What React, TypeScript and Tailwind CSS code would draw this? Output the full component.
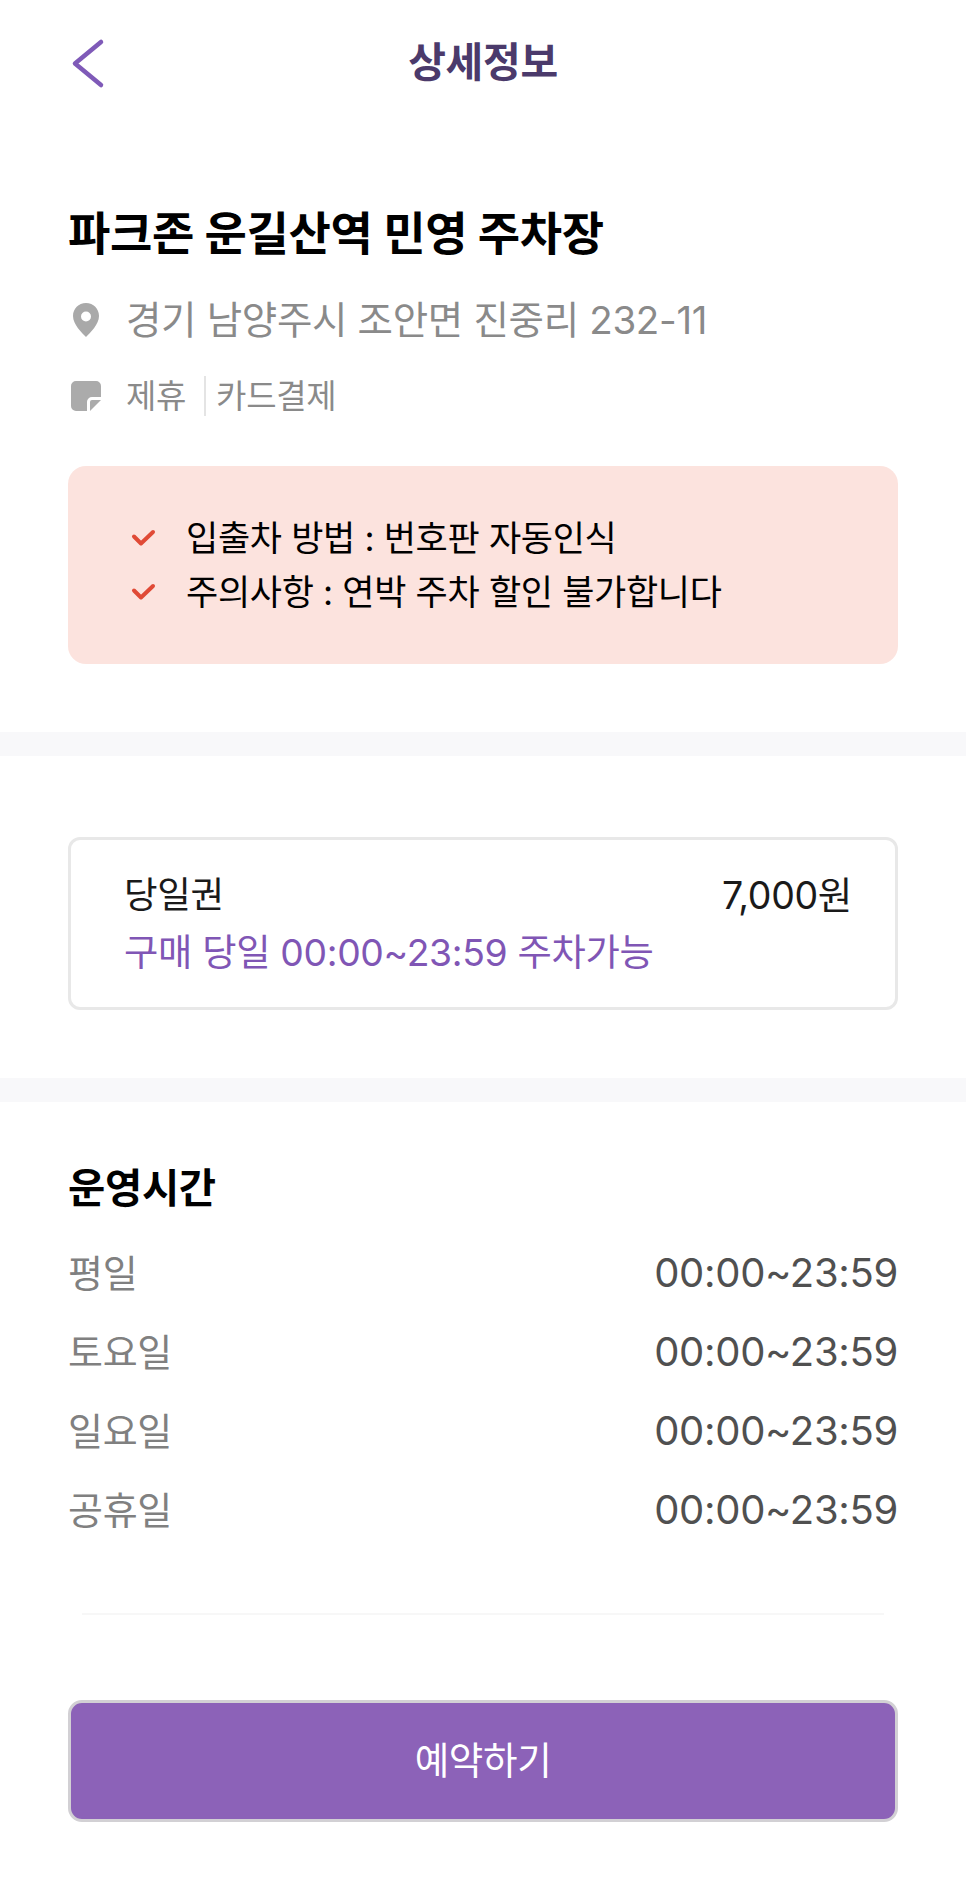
const FONT = "font-['Inter','Noto_Sans_CJK_KR',sans-serif]";

const hours = ["평일", "토요일", "일요일", "공휴일"];

function CheckIcon() {
  return (
    <svg width="26" height="18" viewBox="0 0 26 18" fill="none" className="shrink-0">
      <path d="M3 7.5 L10 14.500 L22 3" stroke="#e04a36" strokeWidth="4" strokeLinecap="round" strokeLinejoin="round" />
    </svg>
  );
}

function Divider() {
  return <div className="h-[24px] bg-[#f8f8fa]" />;
}

export default function App() {
  return (
    <div className={`${FONT} w-[966px] h-[1890px] bg-white overflow-hidden tracking-[-0.02em]`}>
      {/* Header */}
      <div className="relative h-[124px] flex items-center justify-center">
        <button className="absolute left-[70px] top-[38px]">
          <svg width="36" height="52" viewBox="0 0 36 52" fill="none">
            <path d="M31 4 L5 25.500 L31 47" stroke="#7f5ab8" strokeWidth="4.500" strokeLinecap="round" strokeLinejoin="round" />
          </svg>
        </button>
        <h1 className="text-[41px] leading-none font-bold text-[#4b3a6b]">상세정보</h1>
      </div>

      {/* Parking lot info */}
      <div className="px-[68px] pt-[85px]">
        <h2 className="text-[46px] leading-[48px] font-bold text-black">파크존 운길산역 민영 주차장</h2>
        <div className="flex items-center mt-[39px] h-[48px]">
          <svg width="28" height="36" viewBox="0 0 28 36" className="ml-[4px] shrink-0">
            <path
              fillRule="evenodd"
              d="M14 1C6.5 1 1 6.8 1 14c0 8.500 9 17 13 21 4-4 13-12.500 13-21C27 6.800 21.500 1 14 1Zm0 8.500a5 5 0 1 1 0 10 5 5 0 0 1 0-10Z"
              fill="#a9a9a9"
            />
          </svg>
          <span className="ml-[26px] text-[38.500px] leading-none text-[#8a8a8a]">경기 남양주시 조안면 진중리 232-11</span>
        </div>
        <div className="flex items-center mt-[32px] h-[40px]">
          <svg width="30" height="30" viewBox="0 0 30 30" className="ml-[3px] shrink-0">
            <path d="M5 0h20a5 5 0 0 1 5 5v11h-9a5 5 0 0 0-5 5v9H5a5 5 0 0 1-5-5V5a5 5 0 0 1 5-5Z" fill="#ababab" />
            <path d="M19 30v-9a2 2 0 0 1 2-2h9L19 30Z" fill="#ababab" />
          </svg>
          <span className="ml-[25px] text-[33px] leading-none text-[#8a8a8a]">제휴</span>
          <span className="ml-[18px] mr-[10px] h-[40px] w-[2px] bg-[#e4e4e4]" />
          <span className="text-[33px] leading-none text-[#8a8a8a]">카드결제</span>
        </div>

        {/* Notice box */}
        <div className="mt-[50px] h-[198px] rounded-[18px] bg-[#fce3de] pl-[63px] flex flex-col justify-center gap-[14px]">
          <div className="flex items-center h-[40px]">
            <CheckIcon />
            <span className="ml-[29px] text-[35px] leading-none text-black">입출차 방법 : 번호판 자동인식</span>
          </div>
          <div className="flex items-center h-[40px]">
            <CheckIcon />
            <span className="ml-[29px] text-[35px] leading-none text-black">주의사항 : 연박 주차 할인 불가합니다</span>
          </div>
        </div>
      </div>

      <div className="mt-[68px]">
        <Divider />
      </div>

      {/* Ticket */}
      <div className="px-[68px] pt-[81px] pb-[68px]">
        <div className="h-[173px] rounded-[12px] border-[3px] border-[#e8e8e8] pl-[53px] pr-[43px] flex flex-col justify-center">
          <div className="flex justify-between items-center leading-[57px] text-[#1a1a1a]">
            <span className="text-[36.500px]">당일권</span>
            <span className="text-[37.500px]">7,000원</span>
          </div>
          <div className="text-[37.300px] leading-[57px] text-[#8056b5]">구매 당일 00:00~23:59 주차가능</div>
        </div>
      </div>

      <Divider />

      {/* Operating hours */}
      <div className="px-[68px] pt-[62px]">
        <h3 className="text-[40.500px] leading-[50px] font-bold text-black">운영시간</h3>
        <div className="mt-[19px] flex flex-col">
          {hours.map((day) => (
            <div key={day} className="h-[79px] flex items-center justify-between">
              <span className="text-[38px] leading-none text-[#808080]">{day}</span>
              <span className="text-[40px] leading-none text-[#505050]">00:00~23:59</span>
            </div>
          ))}
        </div>
      </div>

      <div className="mx-[82px] mt-[64px] h-[2px] bg-[#f7f7f7]" />

      {/* Reserve button */}
      <div className="px-[68px] pt-[85px]">
        <button className="w-full h-[122px] rounded-[14px] border-[3px] border-[#d2d0d4] bg-[#8c62b8] text-white text-[37.500px] leading-none">
          예약하기
        </button>
      </div>
    </div>
  );
}
